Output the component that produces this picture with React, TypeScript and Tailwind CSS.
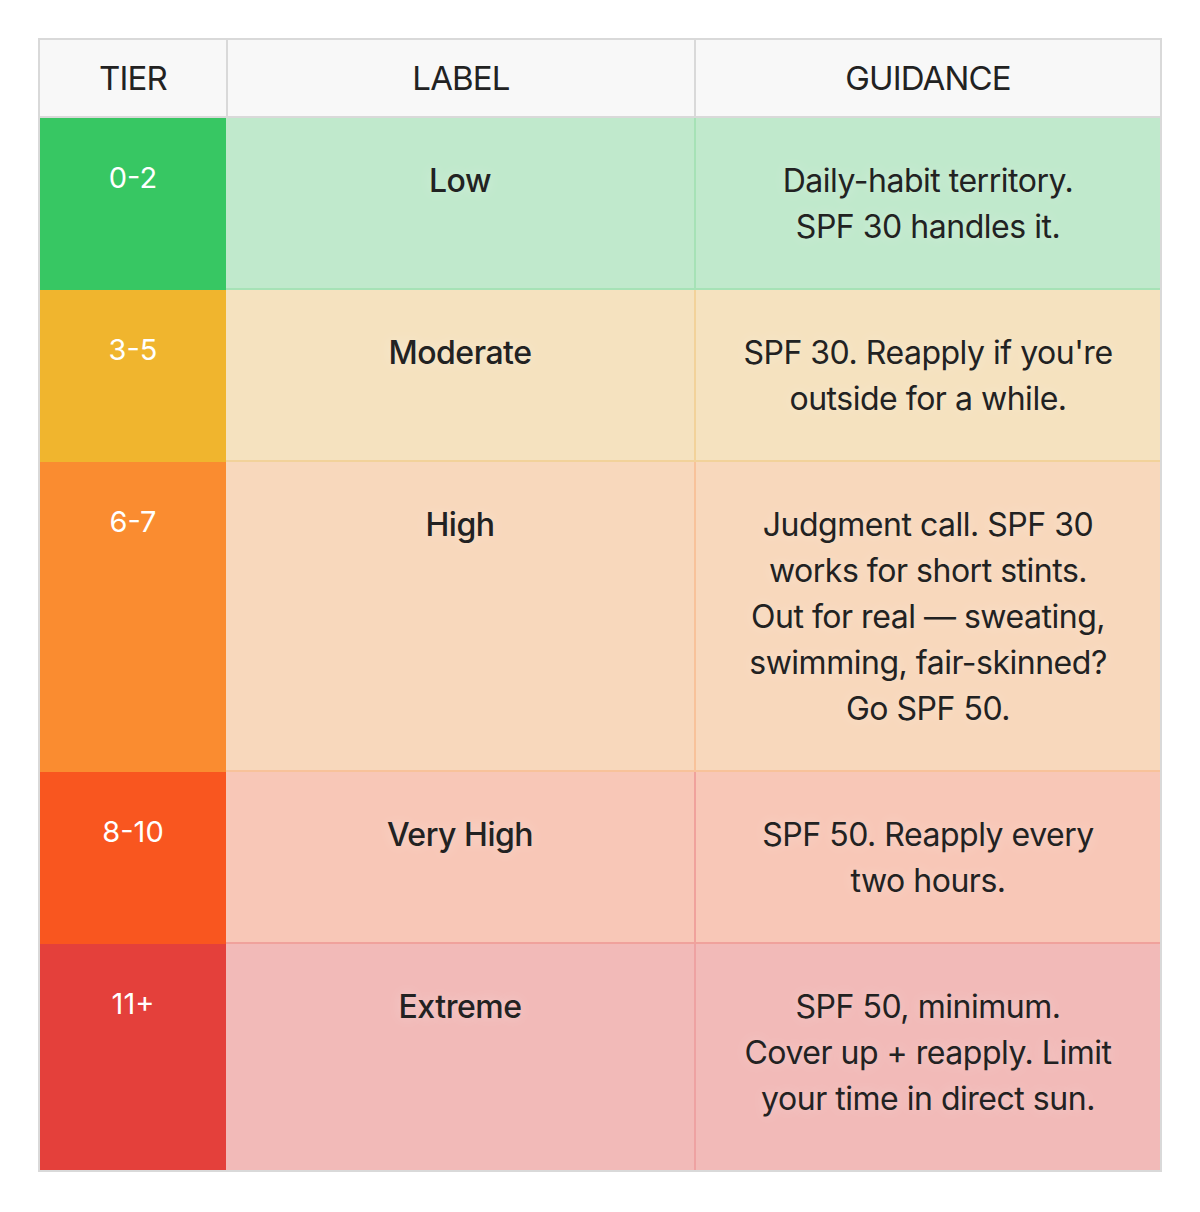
const rows = [
  {
    tier: '0-2',
    label: 'Low',
    lines: ['Daily-habit territory.', 'SPF 30 handles it.'],
    solid: 'bg-[#37c763]',
    light: 'bg-[#c0e9cc]',
    line: 'border-[#a6e2b6]',
  },
  {
    tier: '3-5',
    label: 'Moderate',
    lines: ["SPF 30. Reapply if you're", 'outside for a while.'],
    solid: 'bg-[#f0b52e]',
    light: 'bg-[#f5e2bf]',
    line: 'border-[#f2d29a]',
  },
  {
    tier: '6-7',
    label: 'High',
    lines: [
      'Judgment call. SPF 30',
      'works for short stints.',
      'Out for real — sweating,',
      'swimming, fair-skinned?',
      'Go SPF 50.',
    ],
    solid: 'bg-[#fa8c30]',
    light: 'bg-[#f8d8bc]',
    line: 'border-[#f8c29a]',
  },
  {
    tier: '8-10',
    label: 'Very High',
    lines: ['SPF 50. Reapply every', 'two hours.'],
    solid: 'bg-[#f9561f]',
    light: 'bg-[#f8c7b7]',
    line: 'border-[#f0a29c]',
  },
  {
    tier: '11+',
    label: 'Extreme',
    lines: ['SPF 50, minimum.', 'Cover up + reapply. Limit', 'your time in direct sun.'],
    solid: 'bg-[#e4403b]',
    light: 'bg-[#f2bab8]',
    line: 'border-[#eea2a2]',
  },
];

const body = "font-['Inter','Liberation_Sans',sans-serif]";
const glow = '[text-shadow:0_0_14px_rgba(255,255,255,0.35)]';

export default function App() {
  return (
    <div className="min-h-[1212px] bg-white px-[38px] pt-[38px]">
      <div className="border-2 border-[#d9d9d9] text-[#222]">
        {/* header */}
        <div className="grid grid-cols-[186px_468px_1fr] border-b-2 border-[#d9d9d9] bg-[#f8f8f8] font-['Inter','Liberation_Sans',sans-serif] text-[33px] leading-[38px] tracking-[-0.025em]">
          <div className="py-[19px] text-center">TIER</div>
          <div className="border-l-2 border-[#d9d9d9] py-[19px] text-center">LABEL</div>
          <div className="border-l-2 border-[#d9d9d9] py-[19px] text-center">GUIDANCE</div>
        </div>

        {rows.map((r, i) => {
          const last = i === rows.length - 1;
          const cell = `${r.light} ${r.line} pt-[40px] ${last ? 'pb-[48px]' : 'border-b-2 pb-[38px]'}`;
          return (
            <div key={r.tier} className={`grid grid-cols-[186px_470px_1fr] ${body}`}>
              <div className={`${r.solid} pt-[40px] text-center text-[29px] leading-[40px] text-white`}>
                {r.tier}
              </div>
              <div
                className={`${cell} border-r-2 text-center text-[32px] font-medium leading-[46px] tracking-[-0.015em] ${glow}`}
              >
                {r.label}
              </div>
              <div className={`${cell} text-center text-[32px] leading-[46px] tracking-[-0.015em] ${glow}`}>
                {r.lines.map((l) => (
                  <div key={l} className="whitespace-nowrap">
                    {l}
                  </div>
                ))}
              </div>
            </div>
          );
        })}
      </div>
    </div>
  );
}
